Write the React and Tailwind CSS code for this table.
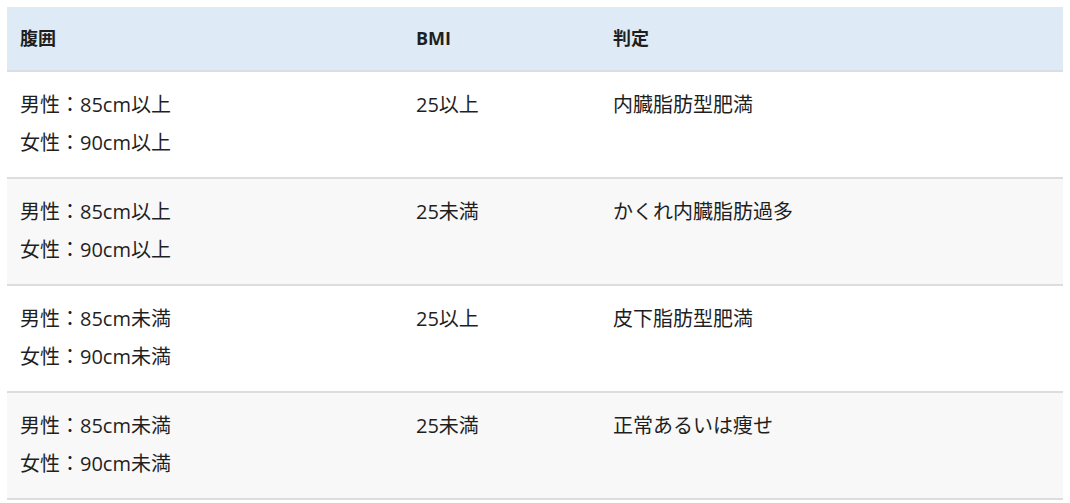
import React from 'react';

// 腹囲とBMIによる肥満タイプ判定表
const rows = [
  { waist: ['男性：85cm以上', '女性：90cm以上'], bmi: '25以上', result: '内臓脂肪型肥満' },
  { waist: ['男性：85cm以上', '女性：90cm以上'], bmi: '25未満', result: 'かくれ内臓脂肪過多' },
  { waist: ['男性：85cm未満', '女性：90cm未満'], bmi: '25以上', result: '皮下脂肪型肥満' },
  { waist: ['男性：85cm未満', '女性：90cm未満'], bmi: '25未満', result: '正常あるいは痩せ' },
];

export default function App() {
  return (
    <div
      className="min-h-[503px] bg-white p-[7px] text-[#1f1f1f]"
      style={{ fontFamily: '"Open Sans", "Noto Sans CJK JP", sans-serif' }}
    >
      <table className="w-full table-fixed border-collapse">
        <colgroup>
          <col className="w-[396px]" />
          <col className="w-[197px]" />
          <col />
        </colgroup>
        <thead>
          <tr className="bg-[#deebf6] border-b-2 border-[#dcdfe2]">
            <th className="px-[13px] py-[15px] text-left text-[18px] leading-[33px] font-bold">腹囲</th>
            <th className="px-[13px] py-[15px] text-left text-[18px] leading-[33px] font-bold">BMI</th>
            <th className="px-[13px] py-[15px] text-left text-[18px] leading-[33px] font-bold">判定</th>
          </tr>
        </thead>
        <tbody>
          {rows.map((row, i) => (
            <tr
              key={i}
              className={`border-b-2 border-[#dddddd] ${i % 2 === 1 ? 'bg-[#f8f8f8]' : 'bg-white'}`}
            >
              <td className="px-[13px] pt-[14px] pb-[15px] align-top text-[20px] leading-[38px]">
                {row.waist.map((w) => (
                  <div key={w}>{w}</div>
                ))}
              </td>
              <td className="px-[13px] pt-[14px] pb-[15px] align-top text-[20px] leading-[38px]">{row.bmi}</td>
              <td className="px-[13px] pt-[14px] pb-[15px] align-top text-[20px] leading-[38px]">{row.result}</td>
            </tr>
          ))}
        </tbody>
      </table>
    </div>
  );
}
